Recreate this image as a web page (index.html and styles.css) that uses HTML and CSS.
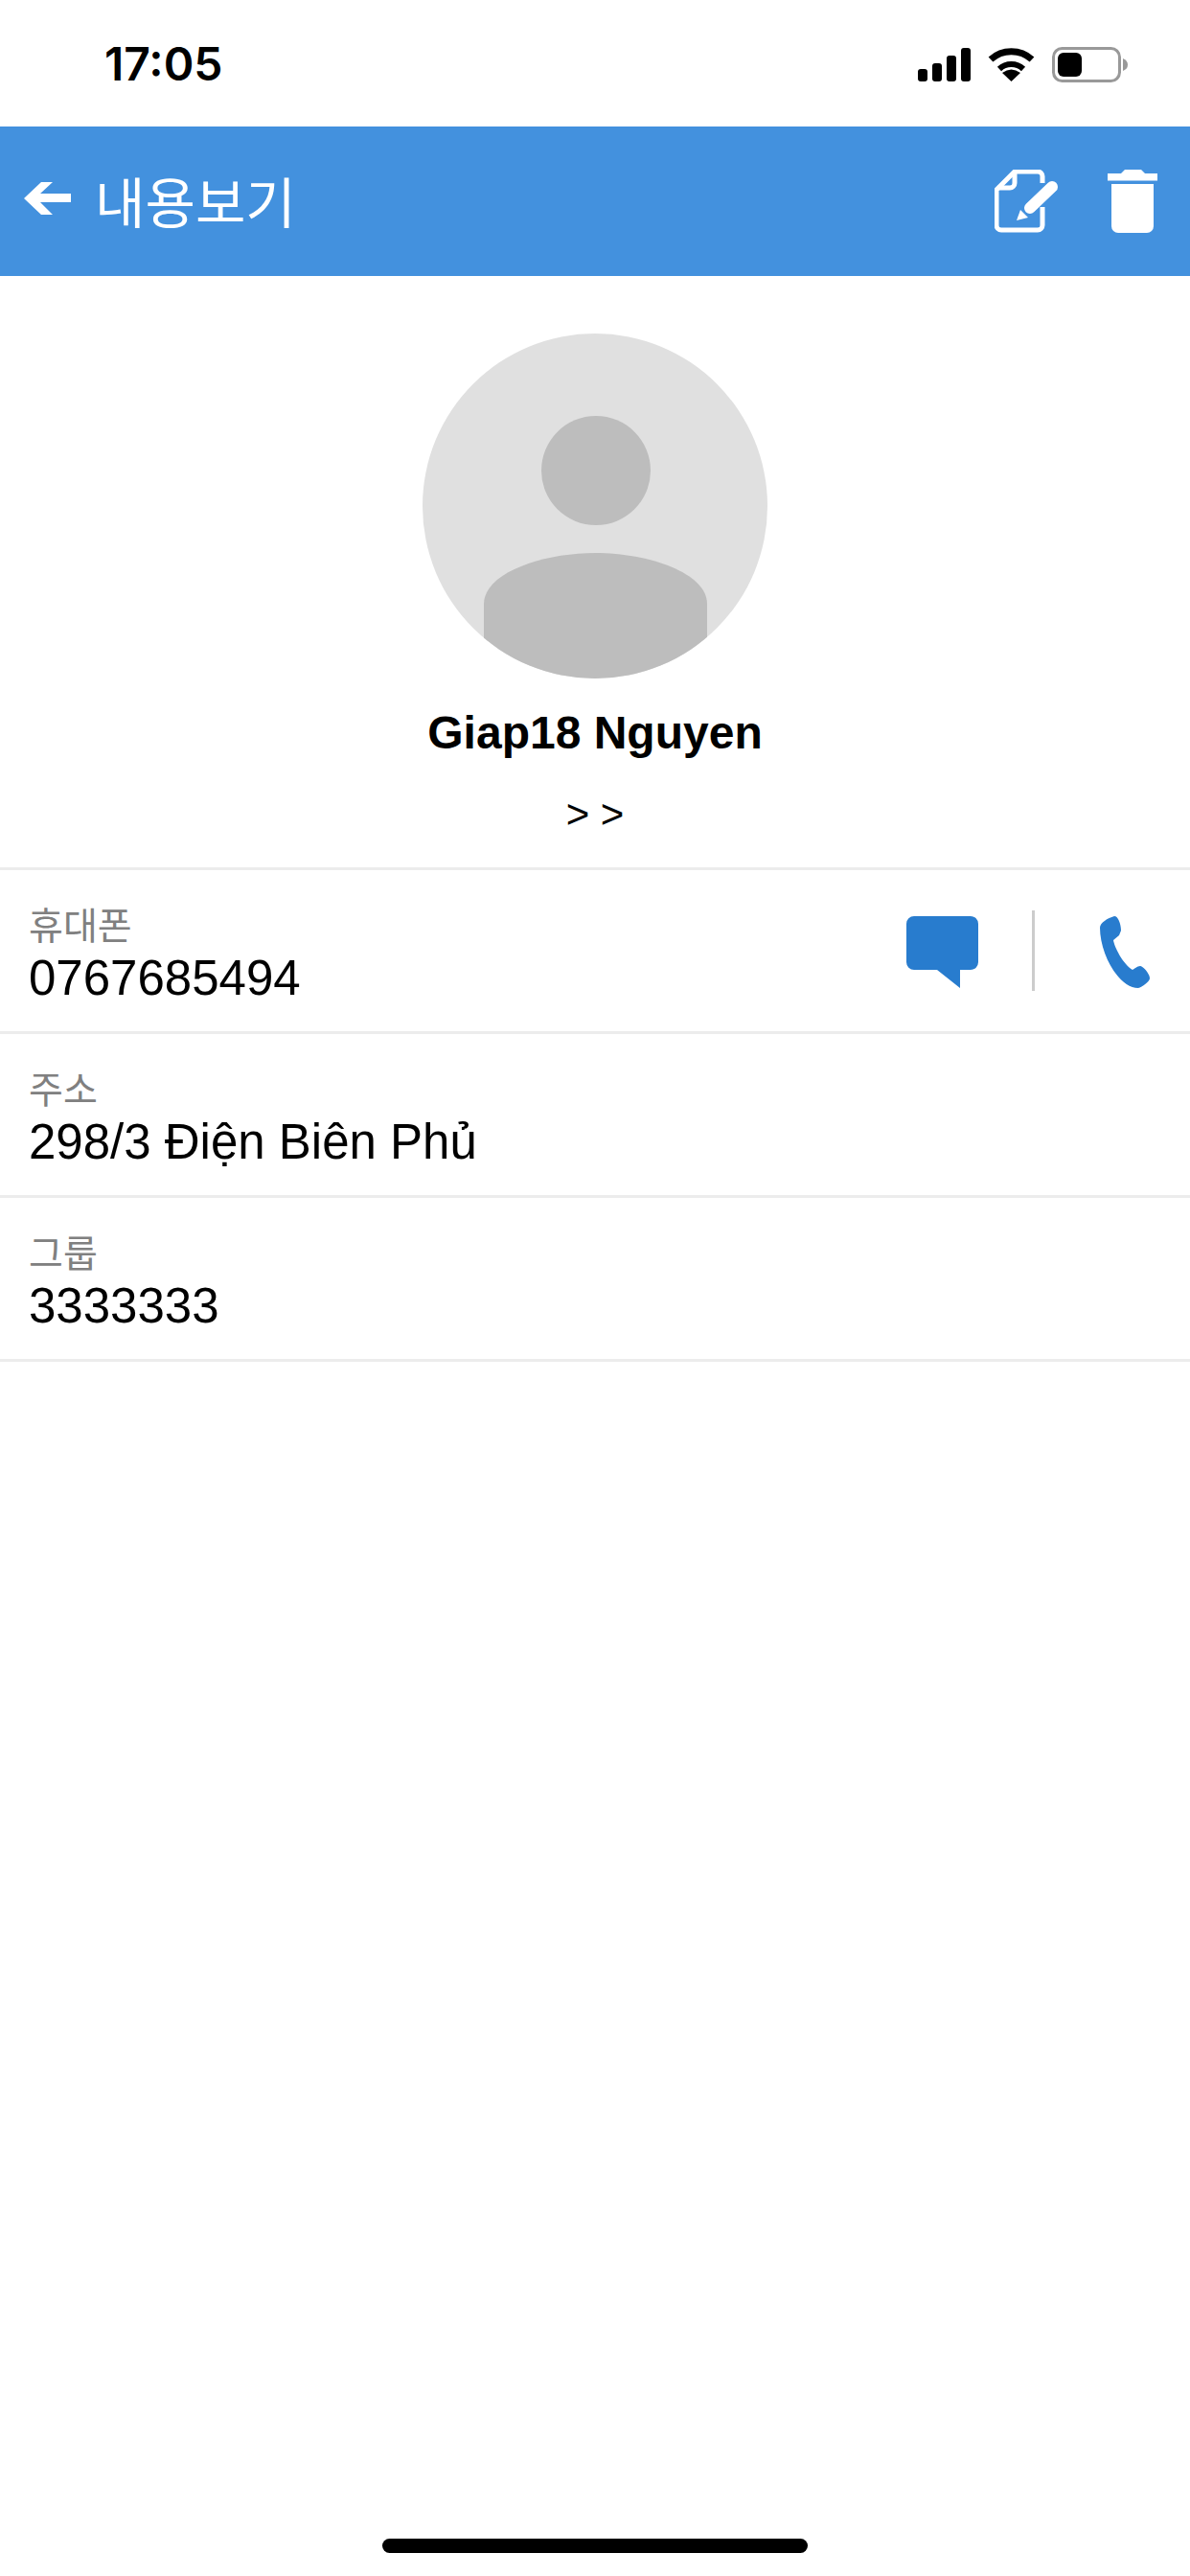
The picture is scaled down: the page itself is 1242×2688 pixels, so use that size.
FILE: index.html
```html
<!DOCTYPE html>
<html lang="ko">
<head>
  <meta charset="UTF-8">
  <meta name="viewport" content="width=device-width, initial-scale=1.0">
  <title>내용보기</title>
  <link rel="stylesheet" href="styles.css">
</head>
<body>
  <div class="status-bar">
    <div class="clock">17:05</div>
    <div class="status-icons">
      <svg class="signal" width="55" height="35" viewBox="0 0 55 35">
        <rect x="0" y="22" width="10" height="13" rx="3"/>
        <rect x="15" y="16" width="10" height="19" rx="3"/>
        <rect x="30" y="8" width="10" height="27" rx="3"/>
        <rect x="45" y="0" width="10" height="35" rx="3"/>
      </svg>
      <svg class="wifi" width="49" height="36" viewBox="0 0 49 36">
        <path d="M3 13 A32 32 0 0 1 46 13" fill="none" stroke="#000" stroke-width="7"/>
        <path d="M12 23 A18 18 0 0 1 37 23" fill="none" stroke="#000" stroke-width="6"/>
        <path d="M24.5 36 L15 27 Q24.5 20 34 27 Z"/>
      </svg>
      <svg class="battery" width="79" height="37" viewBox="0 0 79 37">
        <rect x="1.5" y="1.5" width="69" height="34" rx="9" fill="none" stroke="#999" stroke-width="3"/>
        <rect x="6" y="6" width="25" height="25" rx="6"/>
        <path d="M74 12 Q79 14 79 18.5 Q79 23 74 25 Z" fill="#999"/>
      </svg>
    </div>
  </div>

  <header class="top-bar">
    <a href="#" class="back">
      <svg class="back-arrow" width="49" height="34" viewBox="0 0 49 34"><path d="M0 17 L18 0 H30 L17 12 H49 V21 H17 L30 34 H18 Z"/></svg>
      <span class="title">내용보기</span>
    </a>
    <div class="actions">
      <svg width="66" height="66" viewBox="0 0 66 66">
        <path class="outline" d="M50 14 V7 a5 5 0 0 0 -5 -5 H21 L2 21 V58 a5 5 0 0 0 5 5 H45 a5 5 0 0 0 5 -5 V39"/>
        <path class="outline" d="M21 2 V14 a5 5 0 0 1 -5 5 H3"/>
        <path class="pen" d="M37 40 L60 18"/>
        <path d="M23 53 L27 42 L35 50 Z"/>
      </svg>
      <svg width="52" height="66" viewBox="0 0 52 66">
        <path d="M0 4 H14 L18 0 H35 L39 4 H52 V11.5 H0 Z"/>
        <path d="M4 15 H48 V59 a7 7 0 0 1 -7 7 H11 a7 7 0 0 1 -7 -7 Z"/>
      </svg>
    </div>
  </header>

  <main class="content">
    <section class="profile">
      <svg class="avatar" width="360" height="360" viewBox="0 0 360 360">
        <rect width="360" height="360" fill="#e0e0e0"/>
        <circle cx="181" cy="143" r="57" fill="#bdbdbd"/>
        <path d="M64 282 C64 250 125 229 180.5 229 C236 229 297 250 297 282 V360 H64 Z" fill="#bdbdbd"/>
      </svg>
      <div class="name">Giap18 Nguyen</div>
      <div class="note">&gt; &gt;</div>
    </section>

    <div class="info-row">
      <div class="info-text">
        <div class="info-label">휴대폰</div>
        <div class="info-value">0767685494</div>
      </div>
      <div class="row-actions">
        <svg width="75" height="75" viewBox="0 0 75 75"><path d="M8 0 H67 a8 8 0 0 1 8 8 V48 a8 8 0 0 1 -8 8 H56 V75 L32 56 H8 a8 8 0 0 1 -8 -8 V8 a8 8 0 0 1 8 -8 Z"/></svg>
        <span class="divider"></span>
        <svg width="52" height="75" viewBox="0 0 52 75"><path d="M0 12 C0 7 8 2 15 0 C19 0 22 8 22 15 L20 20 L14 25 C15 32 24 50 34 56 C36 55 39 52 42 52 C45 52 52 60 52 65 C52 68 44 74 40 75 C20 75 0 40 0 12 Z"/></svg>
      </div>
    </div>
    <div class="info-row">
      <div class="info-text">
        <div class="info-label">주소</div>
        <div class="info-value">298/3 Điện Biên Phủ</div>
      </div>
    </div>
    <div class="info-row">
      <div class="info-text">
        <div class="info-label">그룹</div>
        <div class="info-value">3333333</div>
      </div>
    </div>
  </main>

  <div class="home-bar"><span class="home-indicator"></span></div>
</body>
</html>
```

FILE: styles.css
```css
:root {
  --header-blue: #4391de;
  --icon-blue: #287cce;
  --line-color: #ececec;
  --label-color: #808080;
}

* {
  box-sizing: border-box;
}

body {
  margin: 0;
  width: 1242px;
  height: 2688px;
  display: flex;
  flex-direction: column;
  background: #fff;
  color: #000;
  font-family: "Liberation Sans", "Noto Sans CJK KR", sans-serif;
  overflow: hidden;
}

/* Status bar */
.status-bar {
  height: 132px;
  flex-shrink: 0;
  display: flex;
  justify-content: space-between;
  align-items: flex-start;
  padding: 49px 65px 0 109px;
}

.clock {
  font-family: Inter, sans-serif;
  font-weight: 600;
  font-size: 48px;
  line-height: 36px;
}

.status-icons {
  display: flex;
  align-items: flex-start;
  gap: 18px;
}

.signal {
  margin-top: 1px;
}

/* Blue title bar */
.top-bar {
  height: 156px;
  flex-shrink: 0;
  display: flex;
  justify-content: space-between;
  align-items: center;
  padding: 0 34px 0 25px;
  background: var(--header-blue);
  color: #fff;
}

.top-bar svg {
  display: block;
  fill: #fff;
}

.back {
  display: flex;
  align-items: center;
  gap: 25px;
  color: #fff;
  text-decoration: none;
}

.back-arrow {
  margin-bottom: 6px;
}

.title {
  font-family: "Noto Sans CJK KR", sans-serif;
  font-weight: 400;
  font-size: 57px;
  line-height: 60px;
  padding-bottom: 5px;
}

.actions {
  display: flex;
  gap: 52px;
}

.outline {
  fill: none;
  stroke: #fff;
  stroke-width: 5;
}

.pen {
  fill: none;
  stroke: #fff;
  stroke-width: 12;
  stroke-linecap: round;
}

/* Photo, name and note */
.profile {
  display: flex;
  flex-direction: column;
  align-items: center;
  padding-top: 60px;
}

.avatar {
  display: block;
  border-radius: 50%;
}

.name {
  margin-top: 29px;
  font-weight: 700;
  font-size: 48px;
  line-height: 55px;
}

.note {
  margin-top: 34px;
  font-size: 42px;
  line-height: 48px;
  height: 79px;
}

/* Detail rows */
.info-row {
  height: 171px;
  display: flex;
  justify-content: space-between;
  align-items: center;
  padding: 0 42px 0 30px;
  border-top: 3px solid var(--line-color);
}

.info-row:last-child {
  height: 174px;
  border-bottom: 3px solid var(--line-color);
}

.info-text {
  padding-top: 7px;
}

.info-label {
  font-size: 39px;
  line-height: 50px;
  color: var(--label-color);
}

.info-value {
  font-size: 51px;
  line-height: 58px;
}

.row-actions {
  display: flex;
  align-items: center;
  fill: var(--icon-blue);
}

.row-actions svg {
  display: block;
  margin-top: 3px;
}

.divider {
  width: 3px;
  height: 84px;
  margin: 0 68px 0 56px;
  background: #ccc;
}

.content {
  flex: 1;
}

/* Home indicator */
.home-bar {
  flex-shrink: 0;
  display: flex;
  justify-content: center;
  padding-bottom: 24px;
}

.home-indicator {
  width: 444px;
  height: 15px;
  border-radius: 8px;
  background: #000;
}
```
